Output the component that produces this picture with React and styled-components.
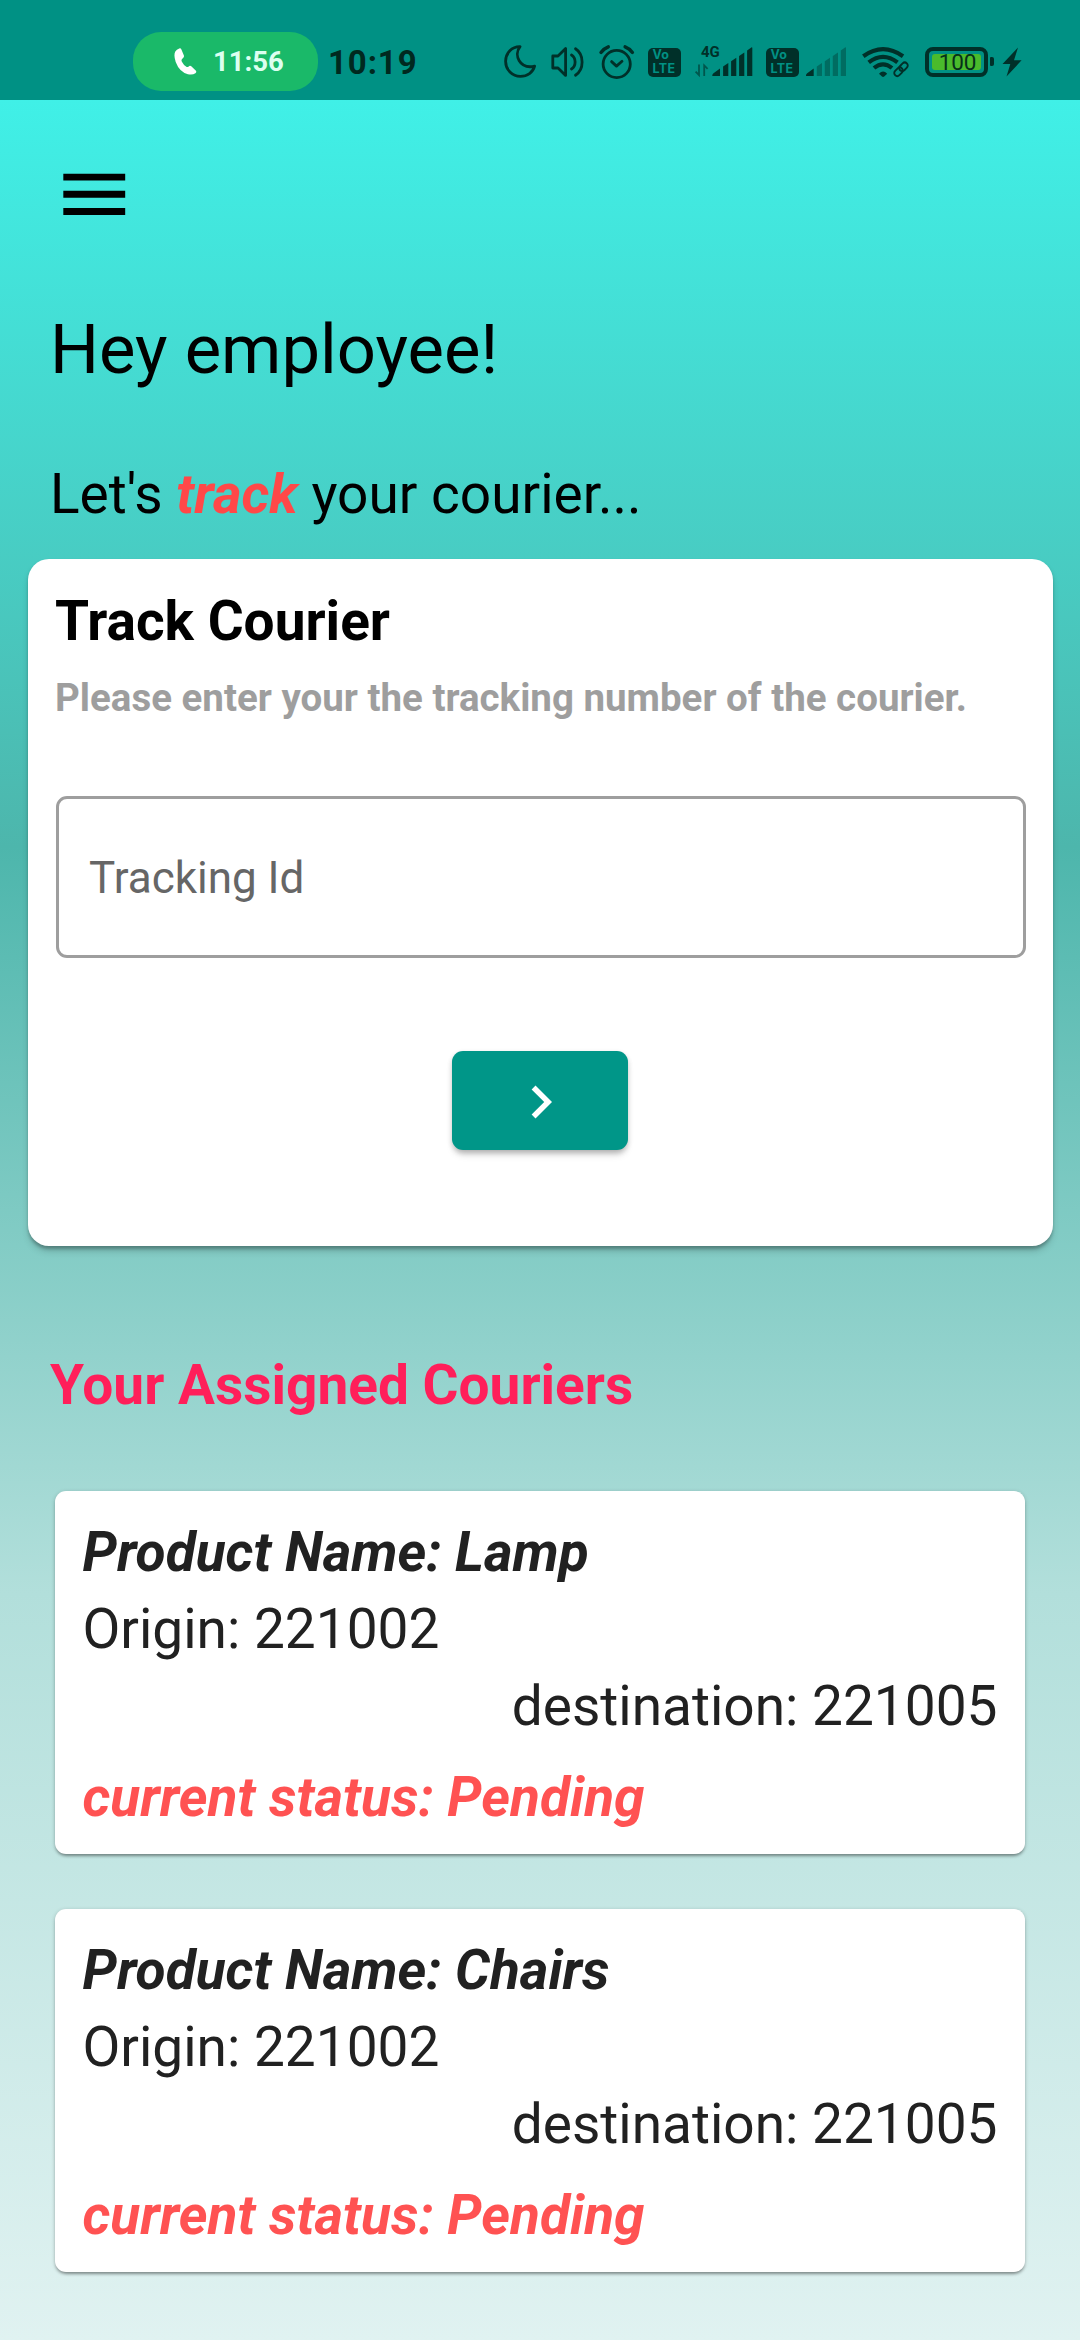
import React from 'react';
import styled, { createGlobalStyle } from 'styled-components';

const GlobalStyle = createGlobalStyle`
  * { box-sizing: border-box; }
  html, body { margin: 0; padding: 0; }
  body { font-family: Roboto, "Liberation Sans", sans-serif; -webkit-font-smoothing: antialiased; }
  p, h1, h2 { margin: 0; }
`;

const INK = '#003029';

const Screen = styled.div`
  width: 1080px;
  height: 2340px;
  display: flex;
  flex-direction: column;
  overflow: hidden;
`;

/* ---------- status bar ---------- */

const StatusBar = styled.header`
  height: 100px;
  flex: none;
  display: flex;
  justify-content: space-between;
  background: #009184;
  padding: 32px 60px 0 133px;
  color: ${INK};
`;

const StatusLeft = styled.div`
  display: flex;
  gap: 10px;
  height: 60px;
`;

const CallPill = styled.div`
  width: 185px;
  height: 59px;
  border-radius: 28px;
  background: #1ab969;
  display: flex;
  align-items: center;
  padding: 0 0 0 41px;
  gap: 16px;
  color: #dcfff0;
  font-size: 27.5px;
  font-weight: 700;
`;

const Clock = styled.span`
  font-size: 33px;
  font-weight: 700;
  line-height: 62px;
  letter-spacing: 0.9px;
  color: #00291f;
`;

const StatusRight = styled.div`
  display: flex;
  align-items: flex-start;
  padding-top: 12px;
  width: 516px;
`;

const Glyph = styled.svg`
  display: block;
  flex: none;
  width: ${(p) => p.$w}px;
  height: 36px;
  margin-right: ${(p) => p.$gap || 0}px;
  overflow: visible;
`;

const LteBadge = styled.div`
  flex: none;
  width: 33px;
  height: 29px;
  margin: 4px ${(p) => p.$gap}px 0 0;
  border-radius: 5px;
  background: ${INK};
  color: #009184;
  display: flex;
  flex-direction: column;
  padding: 0 0 0 4.5px;
  font-family: Inter, Roboto, sans-serif;
  font-weight: 700;
  font-size: 12.5px;
  line-height: 14px;
  letter-spacing: 0.3px;
  white-space: nowrap;
`;

const Network = styled.div`
  flex: none;
  width: 71px;
  height: 36px;
  position: relative;
`;

const NetworkLabel = styled.span`
  position: absolute;
  left: 6px;
  top: -1px;
  font-size: 15px;
  font-weight: 700;
  line-height: 18px;
`;

const Battery = styled.div`
  flex: none;
  width: 63px;
  height: 30px;
  margin: 3px 2px 0 0;
  border: 4px solid ${INK};
  border-radius: 8px;
  padding: 3px;
  display: flex;
`;

const BatteryFill = styled.div`
  flex: 1;
  border-radius: 3px;
  background: #4abb2c;
  color: #06301a;
  font-size: 22.5px;
  line-height: 17px;
  text-align: center;
  letter-spacing: -0.2px;
  padding-left: 2px;
`;

const BatteryTip = styled.div`
  flex: none;
  width: 4px;
  height: 9px;
  margin: 13px 8px 0 0;
  border-radius: 1px 2px 2px 1px;
  background: ${INK};
`;

/* ---------- page ---------- */

const Page = styled.main`
  flex: 1;
  background: linear-gradient(180deg, #40f0e7 0%, #4db6ac 33.333%, #b2dfdb 66.667%, #e0f2f1 100%);
`;

const MenuButton = styled.button`
  display: flex;
  align-items: flex-start;
  border: 0;
  background: none;
  padding: 52.5px 0 0 52.5px;
  height: 190px;
`;

const Greeting = styled.h1`
  font-size: 68.75px;
  font-weight: 400;
  line-height: 80px;
  height: 156px;
  padding: 20px 0 0 50px;
  color: #000;
`;

const Prompt = styled.p`
  font-size: 55px;
  line-height: 64px;
  height: 113px;
  padding: 16px 0 0 50px;
  color: #000;
  em { font-weight: 700; color: #ff4848; }
`;

const TrackCard = styled.section`
  margin: 0 27.5px;
  height: 687px;
  border-radius: 21px;
  background: #fff;
  padding: 30px 27.5px 0;
  box-shadow: 0 5.5px 8px -3px rgba(0, 0, 0, 0.3), 0 2.75px 3px rgba(0, 0, 0, 0.18);
`;

const CardTitle = styled.h2`
  font-size: 55px;
  font-weight: 700;
  line-height: 64px;
  color: #000;
`;

const CardHint = styled.p`
  margin-top: 22px;
  font-size: 38.5px;
  font-weight: 700;
  line-height: 46px;
  color: #9e9e9e;
`;

const IdField = styled.div`
  margin: 75px -0.5px 0 0.5px;
  height: 162px;
  border: 3px solid #9e9e9e;
  border-radius: 11px;
  display: flex;
  align-items: center;
  padding: 2px 30.5px 0;
  font-size: 44px;
  color: #666;
`;

const GoButton = styled.button`
  display: flex;
  align-items: center;
  justify-content: center;
  margin: 93px auto 0;
  width: 176px;
  height: 99px;
  border: 0;
  padding: 2px 0 0 1px;
  border-radius: 11px;
  background: #009688;
  box-shadow: 0 5.5px 8px -3px rgba(0, 0, 0, 0.22), 0 2.75px 5px rgba(0, 0, 0, 0.16);
`;

const SectionTitle = styled.h2`
  height: 245px;
  padding: 107px 0 0 50px;
  font-size: 55px;
  font-weight: 700;
  line-height: 64px;
  color: #ff1f5a;
`;

const CourierList = styled.div`
  display: flex;
  flex-direction: column;
  gap: 55px;
  padding: 0 55px;
`;

const CourierCard = styled.article`
  height: 363px;
  border-radius: 11px;
  background: #fff;
  padding: 29px 27.5px 0;
  box-shadow: 0 2.75px 3px -1px rgba(0, 0, 0, 0.32), 0 1px 4px rgba(0, 0, 0, 0.2);
`;

const CourierLine = styled.p`
  font-size: 55px;
  line-height: 64px;
  margin-top: ${(p) => p.$top || 0}px;
  text-align: ${(p) => (p.$end ? 'right' : 'left')};
  font-weight: ${(p) => (p.$strong ? 700 : 400)};
  font-style: ${(p) => (p.$strong ? 'italic' : 'normal')};
  color: ${(p) => (p.$alert ? '#ff5252' : '#212121')};
`;

const couriers = [
  { product: 'Lamp', origin: '221002', destination: '221005', status: 'Pending' },
  { product: 'Chairs', origin: '221002', destination: '221005', status: 'Pending' },
];

const BARS = [
  'M0 29 L0 28.6 Q0 27 1.2 26.2 L7.7 21.5 V29 Z',
  'M10.8 29 V19.5 L16 16 V29 Z',
  'M18.8 29 V14.3 L24 10.8 V29 Z',
  'M26.8 29 V9.1 L32 5.6 V29 Z',
  'M34.8 29 V3.6 L39 0.4 Q40 0 40 1 V29 Z',
];

function SignalBars({ level }) {
  return BARS.map((d, i) => <path key={d} d={d} fill={INK} opacity={i < level ? 1 : 0.38} />);
}

function Volte({ gap }) {
  return (
    <LteBadge $gap={gap}>
      <span>Vo</span>
      <span>LTE</span>
    </LteBadge>
  );
}

function StatusIcons() {
  return (
    <StatusRight>
      <Glyph $w={33} $gap={14} viewBox="0 0 33 36" fill="none" stroke={INK} strokeWidth="2.8" strokeLinejoin="round">
        <path d="M16 2.6 C8 2.4 1.6 9 1.6 17.3 C1.6 25.8 8.3 32.4 16.4 32.4 C23.4 32.4 29 28.4 30.6 22.2 C15.5 25.5 9.5 11 16 2.6 Z" />
      </Glyph>
      <Glyph $w={33} $gap={15} viewBox="0 0 33 36" fill="none" stroke={INK} strokeWidth="2.8" strokeLinejoin="round" strokeLinecap="round">
        <path d="M1.8 12 H7 L14.6 4.6 V31.4 L7 24 H1.8 Z" />
        <path d="M20.5 11 C25.3 14 25.3 22 20.5 25" />
        <path d="M24.5 4.8 C33.3 10.5 33.3 25.5 24.5 31.2" />
      </Glyph>
      <Glyph $w={35} $gap={14} viewBox="0 0 35 36" fill="none" stroke={INK} strokeWidth="2.8" strokeLinecap="round">
        <circle cx="17.7" cy="20" r="13.6" />
        <path d="M12.6 17.6 L17.5 22.1 L23 17.3" strokeLinejoin="round" />
        <path d="M2 8.4 Q5 4.4 9.3 2.8 M33.4 8.4 Q30.4 4.4 26.1 2.8" strokeWidth="3.4" />
      </Glyph>
      <Volte gap={14} />
      <Network>
        <NetworkLabel>4G</NetworkLabel>
        <Glyph $w={57} viewBox="0 0 57 36">
          <g transform="translate(17.3 3)"><SignalBars level={5} /></g>
          <g stroke={INK} strokeWidth="1.8" fill="none" opacity="0.6">
            <path d="M4 20.5 V31 L0.6 27.6" />
            <path d="M9.2 32 V21.4 L12.6 24.8" />
          </g>
        </Glyph>
      </Network>
      <Volte gap={7} />
      <Glyph $w={40} $gap={16} viewBox="0 0 40 36">
        <g transform="translate(0 3)"><SignalBars level={1} /></g>
      </Glyph>
      <Glyph $w={48} $gap={15} viewBox="0 0 48 36" fill="none" stroke={INK}>
        <path d="M1.3 12.3 Q21 -1.9 41 12.3" strokeWidth="4.2" />
        <path d="M6.7 18.4 Q21 7.2 35.5 18.4" strokeWidth="4.2" />
        <path d="M12 24 Q21 16.6 30 24" strokeWidth="4.2" />
        <path d="M17 29.8 Q21 25.4 25.2 29.8 L22.2 32.6 Q21 33.5 20 32.6 Z" fill={INK} stroke="none" />
        <g transform="translate(39 25.3) rotate(-45)" strokeWidth="1.9">
          <rect x="-8.3" y="-3" width="9.6" height="6" rx="3" />
          <rect x="-1.3" y="-3" width="9.6" height="6" rx="3" />
        </g>
      </Glyph>
      <Battery>
        <BatteryFill>100</BatteryFill>
      </Battery>
      <BatteryTip />
      <Glyph $w={20} viewBox="0 0 20 36">
        <path d="M16 3.5 L0.5 20 H8.3 L4.5 32.5 L19.6 16.3 H12 Z" fill={INK} />
      </Glyph>
    </StatusRight>
  );
}

export default function App() {
  return (
    <>
      <GlobalStyle />
      <Screen>
        <StatusBar>
          <StatusLeft>
            <CallPill>
              <svg width="23" height="27" viewBox="0 0 23 27">
                <path
                  d="M5.2 0.4 Q6.8 -0.2 7.4 1.6 L9.9 7.6 Q10.4 9.2 8.8 10.3 Q6.8 11.6 7.9 13.8 Q9.8 17.7 12.7 19 Q13.8 19.4 14.7 18.4 Q15.7 17.2 17 18.1 L21.7 22.6 Q23 24 21.4 25.3 Q18.6 27.2 13.9 26.2 Q5.4 24 1.7 14 Q-0.6 7.4 1.3 3.6 Q2.6 1.2 5.2 0.4 Z"
                  fill="#fff"
                />
              </svg>
              <span>11:56</span>
            </CallPill>
            <Clock>10:19</Clock>
          </StatusLeft>
          <StatusIcons />
        </StatusBar>

        <Page>
          <MenuButton aria-label="Menu">
            <svg width="82.5" height="82.5" viewBox="0 0 24 24">
              <path d="M3 18h18v-2H3v2zm0-5h18v-2H3v2zm0-7v2h18V6H3z" fill="#000" />
            </svg>
          </MenuButton>
          <Greeting>Hey employee!</Greeting>
          <Prompt>
            Let's <em>track</em> your courier...
          </Prompt>

          <TrackCard>
            <CardTitle>Track Courier</CardTitle>
            <CardHint>Please enter your the tracking number of the courier.</CardHint>
            <IdField>Tracking Id</IdField>
            <GoButton aria-label="Track">
              <svg width="66" height="66" viewBox="0 0 24 24">
                <path d="M10 6L8.59 7.41 13.17 12l-4.58 4.59L10 18l6-6z" fill="#fff" />
              </svg>
            </GoButton>
          </TrackCard>

          <SectionTitle>Your Assigned Couriers</SectionTitle>

          <CourierList>
            {couriers.map((c) => (
              <CourierCard key={c.product}>
                <CourierLine $strong>Product Name: {c.product}</CourierLine>
                <CourierLine $top={13}>Origin: {c.origin}</CourierLine>
                <CourierLine $top={13} $end>destination: {c.destination}</CourierLine>
                <CourierLine $top={27} $strong $alert>current status: {c.status}</CourierLine>
              </CourierCard>
            ))}
          </CourierList>
        </Page>
      </Screen>
    </>
  );
}
